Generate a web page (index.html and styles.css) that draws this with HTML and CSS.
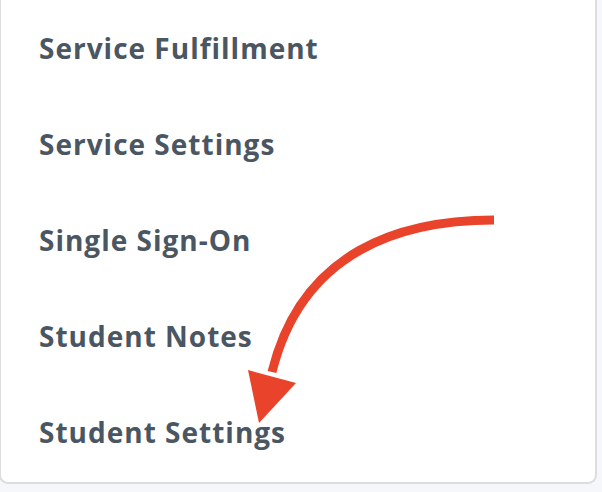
FILE: index.html
```html
<!DOCTYPE html>
<html>
<head>
<meta charset="utf-8">
<link rel="stylesheet" href="styles.css">
</head>
<body>
<div class="card">
  <ul class="menu">
    <li class="item">Service Fulfillment</li>
    <li class="item">Service Settings</li>
    <li class="item">Single Sign-On</li>
    <li class="item">Student Notes</li>
    <li class="item">Student Settings</li>
  </ul>
  <svg class="arrow" width="602" height="492" viewBox="0 0 602 492">
    <path d="M492,220 C400,220 300,250 270,372" fill="none" stroke="#e9432b" stroke-width="9"/>
    <polygon points="246,370 294,383 257,423" fill="#e9432b"/>
  </svg>
</div>
</body>
</html>
```
FILE: styles.css
```css
html, body {
  margin: 0;
  padding: 0;
}
body {
  background: #f5f7fb;
  width: 602px;
  height: 492px;
  overflow: hidden;
}
.card {
  position: relative;
  width: 594px;
  height: 482px;
  background: #ffffff;
  border: 2px solid #dcdde0;
  border-top: none;
  border-radius: 0 0 9px 9px;
  margin-left: -1px;
}
.menu {
  list-style: none;
  margin: 0;
  padding: 0;
}
.item {
  height: 96px;
  display: flex;
  align-items: center;
  padding-left: 38px;
  font-family: "Open Sans", "Lato", sans-serif;
  font-weight: 700;
  font-size: 28px;
  letter-spacing: 1px;
  color: #4a5661;
}
.arrow {
  position: absolute;
  left: 1px;
  top: 0;
}
```
